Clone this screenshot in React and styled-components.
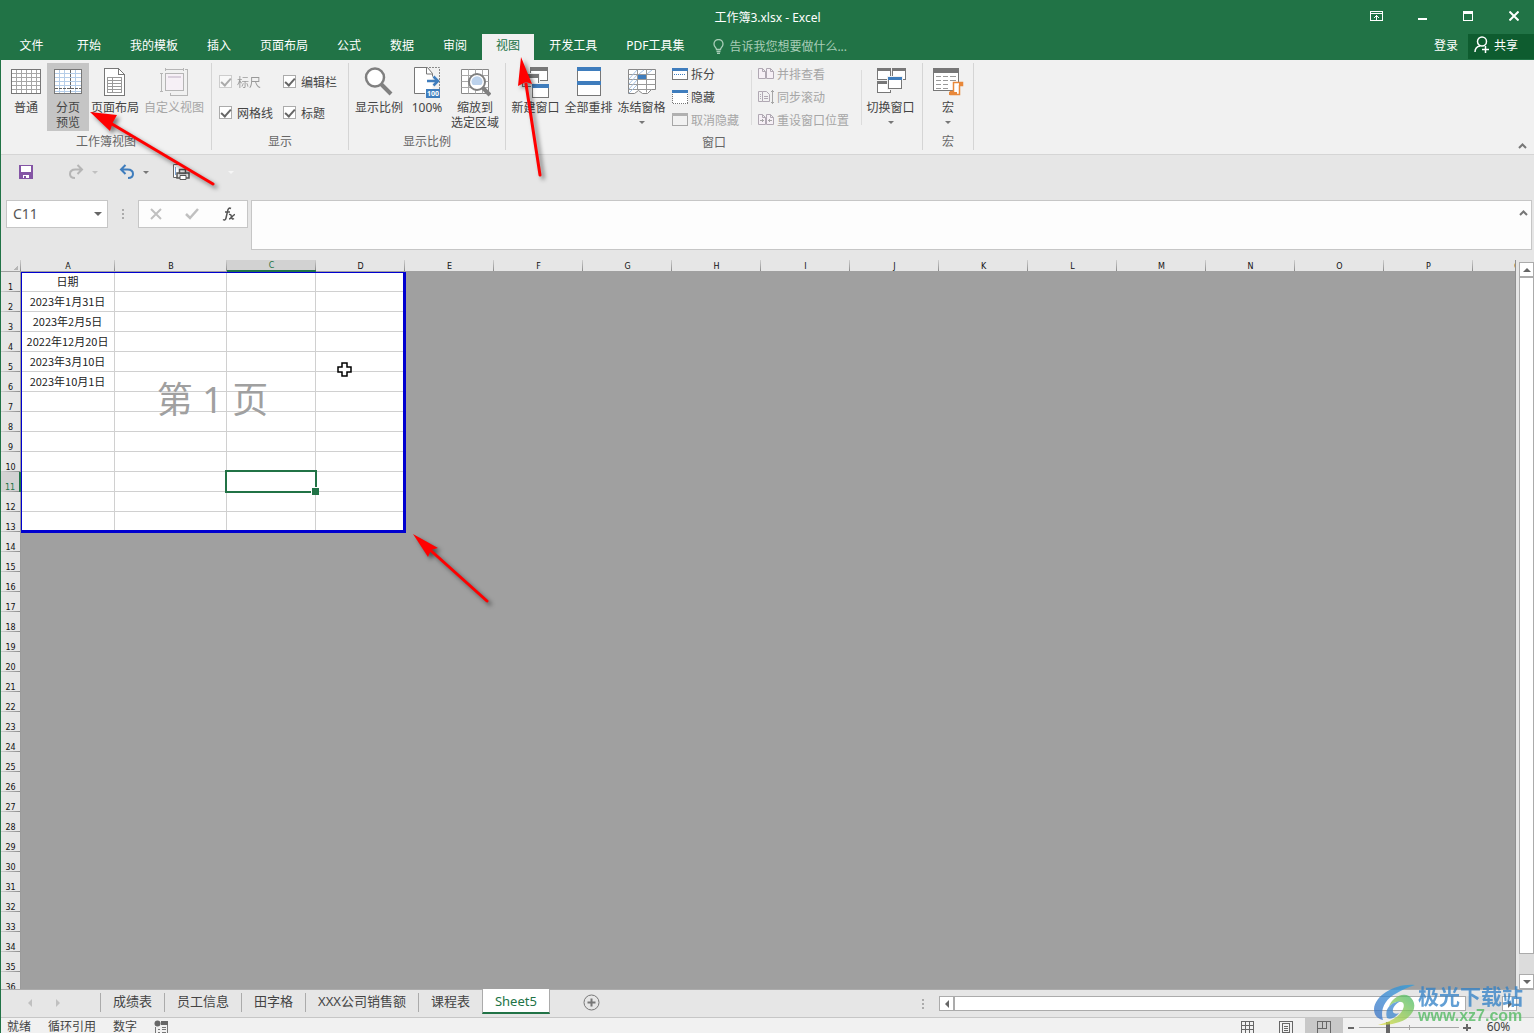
import React from "react"
import styled, { createGlobalStyle, css } from "styled-components"

const GlobalStyle = createGlobalStyle`
  * {
    box-sizing: border-box;
  }
  body {
    margin: 0;
    font-family: "Noto Sans", "Noto Sans CJK SC", sans-serif;
    font-size: 12px;
    color: #444;
  }
  button, input, textarea {
    font: inherit;
    color: inherit;
    margin: 0;
    padding: 0;
    border: 0;
    background: none;
    outline: none;
  }
  svg {
    display: block;
    flex: none;
  }
`

const Window = styled.div`
  position: relative;
  display: flex;
  flex-direction: column;
  height: 100vh;
  overflow: hidden;
  border-left: 1px solid #217346;
  background: #e6e6e6;
`

/* title and menu */

const TitleBar = styled.header`
  display: grid;
  grid-template-columns: 1fr auto 1fr;
  align-items: center;
  flex: none;
  height: 34px;
  background: #217346;
  color: #fff;
`

const Title = styled.h1`
  grid-column: 2;
  margin: 0;
  font-size: 12px;
  font-weight: 400;
`

const WindowButtons = styled.div`
  display: flex;
  justify-content: flex-end;
  gap: 28px;
  padding: 0 11px 2px 0;
`

const WindowButton = styled.button`
  display: flex;
  align-items: center;
  justify-content: center;
  width: 18px;
  height: 32px;
`

const MenuBar = styled.nav`
  display: flex;
  gap: 1px;
  flex: none;
  height: 26px;
  background: #217346;
  color: #fff;
`

const MenuTab = styled.button`
  padding: 0 14px 4px;
  white-space: nowrap;
  ${p => p.$file && "width: 61px;"}
  ${p => p.$active && "background: #f1f1f1; color: #217346;"}
`

const TellMe = styled.label`
  display: flex;
  align-items: center;
  gap: 5px;
  flex: 1;
  padding: 0 0 1px 14px;
  color: #a8cdb7;

  input {
    flex: 1;
  }
  input::placeholder {
    color: #a8cdb7;
    opacity: 1;
  }
`

const SignIn = styled.button`
  padding: 0 9px 4px;
`

const Share = styled.button`
  display: flex;
  align-items: center;
  gap: 4px;
  width: 66px;
  height: 25px;
  padding: 0 0 4px 6px;
  background: #0e5c2f;
`

/* ribbon */

const Ribbon = styled.div`
  display: flex;
  flex: none;
  height: 95px;
  background: #f1f1f1;
  border-bottom: 1px solid #d5d5d5;
`

const Group = styled.section`
  display: flex;
  flex-direction: column;
  margin: 3px 0 4px;
  border-right: 1px solid #d5d5d5;
`

const GroupBody = styled.div`
  display: flex;
  height: 70px;
  padding: 0 ${p => p.$pad || 0}px;
`

const GroupName = styled.h2`
  margin: 0;
  padding-top: 3px;
  font-size: 12px;
  font-weight: 400;
  line-height: 16px;
  text-align: center;
  color: #666;
`

const BigButton = styled.button`
  display: flex;
  flex-direction: column;
  align-items: center;
  width: ${p => p.$w}px;
  padding-top: 4px;
  line-height: 15px;
  white-space: nowrap;
  color: ${p => (p.disabled ? "#a6a6a6" : "#444")};
  ${p => p.$on && "background: #c5c5c5;"}

  svg {
    margin-bottom: 1px;
  }
`

const Caret = styled.i`
  width: 0;
  height: 0;
  border: 3px solid transparent;
  border-top-color: ${p => p.$color || "#777"};
  border-bottom: 0;
  ${p => p.$below && "margin-top: 6px;"}
`

const CheckGrid = styled.div`
  display: grid;
  grid-template-columns: 64px 65px;
  grid-auto-rows: 31px;
  padding: 3px 0 0 7px;
`

const Check = styled.label`
  display: flex;
  align-items: center;
  gap: 5px;
  white-space: nowrap;
  opacity: ${p => (p.$dim ? 0.5 : 1)};

  input {
    display: grid;
    place-items: center;
    appearance: none;
    width: 13px;
    height: 13px;
    border: 1px solid #ababab;
    background: #fff;
  }
  input:checked::before {
    content: "";
    width: 4px;
    height: 8px;
    margin-bottom: 3px;
    border: solid #666;
    border-width: 0 2px 2px 0;
    transform: rotate(42deg);
  }
`

const Stack = styled.div`
  display: flex;
  flex-direction: column;
  width: ${p => p.$w}px;
  padding-left: ${p => p.$pad}px;
`

const Divider = styled.div`
  width: 1px;
  height: 55px;
  margin-top: 7px;
  background: #dcdcdc;
`

const SmallButton = styled.button`
  display: flex;
  align-items: center;
  gap: 3px;
  height: 23px;
  padding-bottom: 1px;
  white-space: nowrap;
  color: ${p => (p.disabled ? "#a6a6a6" : "#444")};
`

const Collapse = styled.button`
  align-self: flex-end;
  margin-left: auto;
  padding: 0 7px 5px 0;
`

/* quick access and formula bar */

const QuickAccess = styled.div`
  display: flex;
  align-items: center;
  flex: none;
  height: 34px;
  padding-left: 17px;
`

const QuickButton = styled.button`
  display: flex;
  align-items: center;
  gap: ${p => p.$gap || 0}px;
  margin-right: ${p => p.$after || 0}px;
`

const FormulaBar = styled.div`
  display: flex;
  align-items: flex-start;
  flex: none;
  padding: 11px 2px 10px 5px;
`

const NameBox = styled.label`
  display: flex;
  align-items: center;
  width: 102px;
  height: 28px;
  padding: 0 5px 1px 6px;
  border: 1px solid #c6c6c6;
  background: #fff;

  input {
    flex: 1;
    min-width: 0;
    font-size: 14px;
    color: #555;
  }
`

const Grip = styled.div`
  display: flex;
  flex-direction: column;
  align-items: center;
  justify-content: center;
  gap: 2px;
  width: ${p => p.$w}px;
  height: 28px;

  i {
    width: 2px;
    height: 2px;
    background: #ababab;
  }
`

const FormulaButtons = styled.div`
  display: flex;
  align-items: center;
  justify-content: space-around;
  width: 110px;
  height: 28px;
  margin-right: 3px;
  border: 1px solid #c6c6c6;
  background: #fdfdfd;
`

const FormulaInput = styled.div`
  display: flex;
  align-items: flex-start;
  flex: 1;
  height: 50px;
  border: 1px solid #c6c6c6;
  background: #fdfdfd;

  textarea {
    flex: 1;
    height: 48px;
    resize: none;
  }
  button {
    padding: 9px 3px;
  }
`

/* sheet */

const SheetArea = styled.main`
  display: flex;
  flex: 1;
  min-height: 0;
`

const SheetView = styled.div`
  position: relative;
  flex: 1;
  min-width: 0;
  overflow: hidden;
  background: #a0a0a0;
  border-right: 1px solid #8f8f8f;
`

const Sheet = styled.table`
  table-layout: fixed;
  width: 1561px;
  border-collapse: separate;
  border-spacing: 0;
`

const headFont = css`
  font-family: "DejaVu Sans", sans-serif;
  font-size: 8px;
  font-weight: 400;
  line-height: 8px;
  color: #111;
`

const ColHead = styled.th`
  ${headFont}
  height: 12px;
  padding: 2px 0 0;
  background: linear-gradient(#cfcfcf, #8c8c8c) right / 1px 100% no-repeat #e6e6e6;
  border-bottom: 1px solid #a0a0a0;
  ${p =>
    p.$on &&
    css`
      background-color: #d2d2d2;
      color: #217346;
      border-bottom: 2px solid #217346;
    `}
`

const Corner = styled.th`
  height: 12px;
  padding: 0;
  background:
    linear-gradient(135deg, transparent 50%, #b5b5b5 50%) 13px 6px / 4px 4px no-repeat,
    linear-gradient(#cfcfcf, #8c8c8c) right / 1px 100% no-repeat #e6e6e6;
  border-bottom: 1px solid #a0a0a0;
`

const RowHead = styled.th`
  ${headFont}
  height: 20px;
  padding: 0;
  vertical-align: bottom;
  background: linear-gradient(90deg, #cfcfcf, #8c8c8c) bottom / 100% 1px no-repeat #e6e6e6;
  border-right: 1px solid #9b9b9b;
  ${p =>
    p.$on &&
    css`
      background-color: #d2d2d2;
      color: #217346;
      border-right: 2px solid #217346;
    `}
`

const Cell = styled.td`
  height: 20px;
  padding: 0 0 2px;
  font-family: "Noto Sans CJK SC", sans-serif;
  font-size: 11px;
  line-height: 16px;
  text-align: center;
  white-space: nowrap;
  color: #222;
  ${p => p.$inPage && "background: #fff; border: solid #d0d0d0; border-width: 0 1px 1px 0;"}
`

const PageFrame = styled.div`
  position: absolute;
  left: 20px;
  top: 12px;
  display: flex;
  align-items: center;
  justify-content: center;
  width: 385px;
  height: 261px;
  padding-bottom: 8px;
  border: solid #0000d0;
  border-width: 1px 3px 3px 1px;
  font-size: 36px;
  color: #a0a0a0;
  pointer-events: none;
`

const Selection = styled.div`
  position: absolute;
  left: 224px;
  top: 210px;
  width: 92px;
  height: 23px;
  border: 2px solid #217346;

  &::after {
    content: "";
    position: absolute;
    right: -4px;
    bottom: -4px;
    width: 7px;
    height: 7px;
    border: solid #fff;
    border-width: 1px 0 0 1px;
    background: #217346;
  }
`

const CrossPointer = styled.svg`
  position: absolute;
  left: 336px;
  top: 102px;
`

const VScroll = styled.div`
  display: flex;
  flex-direction: column;
  width: 18px;
  padding: 2px 0 0 3px;
`

const HScroll = styled.div`
  display: flex;
  width: 578px;
  height: 15px;
  margin: 6px 17px 0 0;
`

const ScrollButton = styled.button`
  display: flex;
  align-items: center;
  justify-content: center;
  width: 15px;
  height: 15px;
  border: 1px solid #ababab;
  background: #fff;
`

const Thumb = styled.div`
  flex: ${p => p.$size};
  border: 1px solid #ababab;
  background: #fff;
`

const Track = styled.div`
  flex: ${p => p.$size};
  background: #dcdcdc;
`

/* sheet tabs and status */

const SheetBar = styled.div`
  display: flex;
  flex: none;
  height: 29px;
  border-top: 1px solid #ababab;
  border-bottom: 1px solid #c6c6c6;
`

const SheetNav = styled.div`
  display: flex;
  align-items: center;
  gap: 20px;
  width: 99px;
  padding: 0 0 2px 25px;
`

const SheetTab = styled.button`
  height: 19px;
  margin-top: 3px;
  padding: 0 12px 3px;
  border-left: 1px solid #ababab;
  font-size: 13px;
  line-height: 16px;
  white-space: nowrap;
  ${p =>
    p.$active &&
    css`
      height: 25px;
      margin-top: -1px;
      border: solid #ababab;
      border-width: 0 1px;
      border-bottom: 2px solid #217346;
      padding-bottom: 0;
      background: #fff;
      color: #217346;
    `}
`

const AddSheet = styled.button`
  display: flex;
  align-items: center;
  margin: 0 auto 2px 33px;
`

const StatusBar = styled.footer`
  display: flex;
  flex: none;
  height: 15px;
  padding-left: 6px;
  overflow: hidden;
  line-height: 17px;
  background: #f1f1f1;
`

const StatusText = styled.span`
  margin-right: 17px;
`

const StatusTools = styled.div`
  display: flex;
  margin-left: auto;
`

const ViewButton = styled.button`
  display: flex;
  align-items: flex-start;
  justify-content: center;
  width: 38px;
  height: 15px;
  padding-top: 3px;
  ${p => p.$on && "background: #c8c8c8;"}
`

const ZoomButton = styled.button`
  display: flex;
  width: 16px;
  padding: 5px 4px 0;
`

const ZoomRange = styled.input`
  appearance: none;
  width: 100px;
  height: 19px;
  background:
    linear-gradient(#a6a6a6, #a6a6a6) center / 1px 5px no-repeat,
    linear-gradient(#a6a6a6, #a6a6a6) center / 100% 1px no-repeat;

  &::-webkit-slider-thumb {
    appearance: none;
    width: 4px;
    height: 11px;
    background: #666;
  }
`

const ZoomValue = styled.button`
  width: 59px;
  padding-right: 12px;
  line-height: 17px;
`

/* overlays */

const Arrows = styled.svg`
  position: absolute;
  left: -1px;
  top: 0;
  pointer-events: none;
  filter: drop-shadow(3px 3px 2px rgba(0, 0, 0, 0.5));
`

const SiteMark = styled.div`
  position: absolute;
  right: 11px;
  bottom: 7px;
  display: flex;
  align-items: center;
  opacity: 0.75;
  pointer-events: none;
`

const SiteName = styled.div`
  font-size: 21px;
  font-weight: 700;
  line-height: 22px;
  color: #2e7fc6;
`

const SiteUrl = styled.div`
  font-family: "Liberation Sans", sans-serif;
  font-size: 16px;
  font-weight: 700;
  line-height: 18px;
  color: #4cb85c;
`

/* icons */

const Icon = ({ w = 32, h = 32, children, ...rest }) => (
  <svg width={w} height={h} viewBox={`0 0 ${w} ${h}`} fill="none" {...rest}>
    {children}
  </svg>
)

const NormalIcon = () => (
  <Icon shapeRendering="crispEdges">
    <rect x="1.5" y="2.5" width="29" height="24" fill="#fff" stroke="#777" />
    <path
      d="M2 6.5h28M2 10.5h28M2 14.5h28M2 18.5h28M2 22.5h28M6.5 3v23M11.5 3v23M16.5 3v23M21.5 3v23M26.5 3v23"
      stroke="#a6a6a6"
    />
  </Icon>
)

const PageBreakIcon = () => (
  <Icon shapeRendering="crispEdges">
    <rect x="2.5" y="2.5" width="27" height="24" fill="#fff" stroke="#777" />
    <path
      d="M3 6.5h26M3 10.5h26M3 14.5h26M3 18.5h26M3 24.5h26M7.5 3v23M12.5 3v23M23.5 3v23"
      stroke="#b5cde8"
    />
    <path d="M18.5 3v23M3 21.5h26" stroke="#666" strokeDasharray="3 1" />
  </Icon>
)

const PageLayoutIcon = () => (
  <Icon shapeRendering="crispEdges">
    <path d="M5.5 1.5h14l6 6v21h-20z" fill="#fff" stroke="#777" />
    <path d="M19.5 1.5v6h6" stroke="#777" />
    <path d="M8.5 10.5h14v15h-14zM8.5 13.5h14M8.5 16.5h14M8.5 19.5h14M8.5 22.5h14M13.5 10.5v15" stroke="#999" />
  </Icon>
)

const CustomViewIcon = () => (
  <Icon shapeRendering="crispEdges" stroke="#b5b5b5">
    <path d="M7.5 1v3M25.5 1v3M7 2.5h18M3.5 7v17M2 6.5h3M2 24.5h3" />
    <rect x="7.5" y="6.5" width="18" height="17" fill="#f6f0f6" />
    <path d="M10 9.5h13M10 10.5h13" stroke="#d9cfdc" />
    <path d="M27 2.5h2.5v26h-17V26" />
  </Icon>
)

const ZoomIcon = () => (
  <Icon>
    <path d="M18 17l10 10" stroke="#808080" strokeWidth="4" />
    <circle cx="12" cy="10.500" r="9" fill="#fff" stroke="#808080" strokeWidth="2.500" />
  </Icon>
)

const HundredIcon = () => (
  <Icon>
    <path d="M3.500 .5h12l6 6v20h-18z" fill="#fff" />
    <path d="M14 26.500H3.500V.5h13l5 6v3M15.500 .5v6.500h6" stroke="#777" />
    <path d="M18 .5h10.500v22" stroke="#888" strokeDasharray="2 1" />
    <path d="M16 14h11M22.500 9.500l4.500 4.500-4.500 4.500" stroke="#3f7dbd" strokeWidth="2.500" />
    <rect x="15" y="22" width="14" height="9" fill="#3f7dbd" />
    <text x="22" y="29" textAnchor="middle" fontSize="7" fontWeight="700" fill="#fff">
      100
    </text>
  </Icon>
)

const ZoomSelectionIcon = () => (
  <Icon>
    <path d="M2.500 2.500h27v24h-27z" fill="#fff" stroke="#888" />
    <path d="M2.500 8.500h27M2.500 14.500h27M2.500 20.500h27M9.500 2.500v24M16.500 2.500v24M23.500 2.500v24" stroke="#aaa" />
    <path d="M23 20l8 8" stroke="#808080" strokeWidth="4" />
    <circle cx="18" cy="15" r="8" fill="#fff" stroke="#808080" strokeWidth="2" />
    <path d="M13 17a5.500 5.500 0 1 1 10 0l-1 1h-8z" fill="#bcd2ec" />
  </Icon>
)

const Pane = ({ x, y, w, h, color = "#777", bar = 3 }) => (
  <g>
    <rect x={x - 1} y={y - 1} width={w + 2} height={h + 2} fill="#f1f1f1" />
    <rect x={x + 0.5} y={y + 0.5} width={w - 1} height={h - 1} fill="#fff" stroke="#777" />
    <rect x={x} y={y} width={w} height={bar} fill={color} />
  </g>
)

const NewWindowIcon = () => (
  <Icon shapeRendering="crispEdges">
    <Pane x={10} y={0} w={18} h={14} bar={4} />
    <Pane x={2} y={7} w={17} h={13} bar={4} />
    <Pane x={12} y={17} w={17} h={14} color="#3f7dbd" bar={4} />
  </Icon>
)

const ArrangeIcon = () => (
  <Icon shapeRendering="crispEdges">
    <rect x="4.5" y=".5" width="23" height="28" fill="#fff" stroke="#777" />
    <path d="M4 0h24v4H4zM4 14h24v4H4z" fill="#3f7dbd" />
  </Icon>
)

const FreezeIcon = () => (
  <Icon>
    <path d="M2.500 2.500h27v20l-4 0-4 4h-5l-4-3-4 3h-6z" fill="#fff" stroke="#888" />
    <path d="M2.500 7.500h27M2.500 12.500h27M2.500 17.500h27M2.500 22.500h23M11.500 2.500v20M20.500 2.500v23" stroke="#999" />
    <path d="M3 12l8-9M3 17l8-9M3 22l8-9M13 7l5-4M21 7l5-4M3 26l8-8" stroke="#a9c5e5" />
    <rect x="12" y="8" width="8" height="4" fill="#3f7dbd" />
  </Icon>
)

const SwitchIcon = () => (
  <Icon shapeRendering="crispEdges">
    <Pane x={2} y={1} w={14} h={12} />
    <Pane x={17} y={1} w={14} h={12} />
    <Pane x={2} y={14} w={14} h={12} />
    <Pane x={13} y={10} w={14} h={12} color="#3f7dbd" />
  </Icon>
)

const MacroIcon = () => (
  <Icon>
    <rect x="1.500" y="1.500" width="25" height="22" fill="#fff" stroke="#777" />
    <path d="M1 1h26v5H1z" fill="#777" />
    <path d="M4 9.500h5m2 0h5m2 0h6M4 13.500h5m2 0h5m2 0h6M4 17.500h5m2 0h5M4 21.500h5m2 0h5" stroke="#999" />
    <path d="M21.500 15.500h9v3h-3v9h-9v-3h3z" fill="#fff" stroke="#e8883a" strokeWidth="1.500" />
    <path d="M17 25h8v3h-8zM27 15h4v4h-4z" fill="#e8883a" />
  </Icon>
)

const SplitIcon = () => (
  <Icon w={16} h={14} shapeRendering="crispEdges">
    <rect x=".5" y="1.5" width="15" height="11" fill="#fff" stroke="#777" />
    <path d="M0 1h16v3H0z" fill="#3f7dbd" />
    <path d="M2 7.5h12" stroke="#3f7dbd" strokeDasharray="1 1" />
  </Icon>
)

const HideIcon = () => (
  <Icon w={16} h={14} shapeRendering="crispEdges">
    <rect x=".5" y=".5" width="15" height="13" fill="#fff" stroke="#777" strokeDasharray="1 1" />
    <path d="M0 0h16v3H0z" fill="#3f7dbd" />
  </Icon>
)

const UnhideIcon = () => (
  <Icon w={16} h={14} shapeRendering="crispEdges">
    <rect x=".5" y=".5" width="15" height="12" stroke="#a6a6a6" />
    <path d="M0 0h16v3H0z" fill="#b0b0b0" />
  </Icon>
)

const pages = "M.5 1.500h4l3 3v7h-7zM8.500 1.500h4l3 3v7h-7zM4.500 1.500v3h3M12.500 1.500v3h3"

const SideIcon = () => (
  <Icon w={16} h={14}>
    <path d={pages} fill="#f6f0f6" stroke="#b0a8b3" />
  </Icon>
)

const SyncIcon = () => (
  <Icon w={16} h={14}>
    <path d="M4.500 1.500h-4v10h4M4.500 1.500h4l3 3v7h-7zM2 4.500h1M2 6.500h1M2 8.500h1M6 6.500h4M6 8.500h4" stroke="#b0a8b3" />
    <path d="M14.500 0v14M13 1.500h3M13 12.500h3" stroke="#a6a6a6" />
  </Icon>
)

const ResetIcon = () => (
  <Icon w={16} h={14}>
    <path d={pages} fill="#f6f0f6" stroke="#b0a8b3" />
    <path d="M2 7.500h4M4.500 6v3M10 7.500h4M11.500 6v3" stroke="#a6a6a6" />
  </Icon>
)

const Chevron = () => (
  <Icon w={9} h={6}>
    <path d="M1 5l3.500-3.500L8 5" stroke="#777" strokeWidth="2" />
  </Icon>
)

const Triangle = ({ turn = 0, color = "#666" }) => (
  <Icon w={8} h={8}>
    <path d="M0 2h8l-4 4z" fill={color} transform={`rotate(${turn} 4 4)`} />
  </Icon>
)

const SaveIcon = () => (
  <Icon w={16} h={16} shapeRendering="crispEdges">
    <path d="M1 1h14v14H1z" fill="#8455a5" />
    <path d="M3 2h10v6H3zM5 11h6v3H5z" fill="#fff" />
    <path d="M6 12h2v2H6z" fill="#8455a5" />
  </Icon>
)

const UndoIcon = ({ color, flip }) => (
  <Icon w={16} h={16}>
    <path
      d="M6.500 1L2 5.500l4.500 4.500M2.500 5.500h6c3.500 0 5.500 2 5.500 4.500s-2 4-5 4"
      stroke={color}
      strokeWidth="2"
      transform={flip ? "matrix(-1 0 0 1 16 0)" : undefined}
    />
  </Icon>
)

const PreviewIcon = () => (
  <Icon w={18} h={16}>
    <path d="M6 13.500H1.500v-13h8l3 3" fill="#fff" stroke="#666" />
    <path d="M3.500 3v8" stroke="#7ba4d3" />
    <path d="M7.500 5.500h6v4h-6zM5 9h12v5H5z" fill="#e6e6e6" stroke="#555" strokeWidth="1.500" />
    <path d="M8 11.500h6v4H8z" fill="#fff" stroke="#555" />
  </Icon>
)

const LogoIcon = () => (
  <Icon w={46} h={42}>
    <defs>
      <linearGradient id="markBlue" x1="1" y1="0" x2="0" y2="1">
        <stop offset="0" stopColor="#2b9fe0" />
        <stop offset="1" stopColor="#3a70c4" />
      </linearGradient>
      <linearGradient id="markGreen" x1="1" y1="0" x2="0" y2="1">
        <stop offset="0" stopColor="#42b96a" />
        <stop offset="1" stopColor="#e2de3c" />
      </linearGradient>
    </defs>
    <path d="M43 1C24-1 3 11 2 25c0 7 4 10 9 11C8 27 12 15 25 9 30 6 36 3 43 1z" fill="url(#markBlue)" />
    <path d="M37 12c8 6 7 16-3 23-8 5-19 6-28 6 11-3 20-7 24-14 3-5 2-9-1-9-4-1-9 1-12 5 2-8 12-15 20-11z" fill="url(#markGreen)" />
    <path d="M15 34c-3-9 4-16 14-17-6 3-9 7-8 11 1 2 4 2 6 1-3 4-8 7-12 5z" fill="#3a86cf" />
  </Icon>
)

const tabs = ["开始", "我的模板", "插入", "页面布局", "公式", "数据", "审阅", "视图", "开发工具", "PDF工具集"]
const columns = "ABCDEFGHIJKLMNOPQ".split("")
const rows = Array.from({ length: 36 }, (_, i) => i + 1)
const dates = ["日期", "2023年1月31日", "2023年2月5日", "2022年12月20日", "2023年3月10日", "2023年10月1日"]
const sheets = ["成绩表", "员工信息", "田字格", "XXX公司销售额", "课程表", "Sheet5"]
const colWidths = { A: 94, B: 112 }

function ViewRibbon() {
  return (
    <Ribbon>
      <Group>
        <GroupBody $pad={4}>
          <BigButton $w={42}><NormalIcon />普通</BigButton>
          <BigButton $w={42} $on><PageBreakIcon />分页<br />预览</BigButton>
          <BigButton $w={52}><PageLayoutIcon />页面布局</BigButton>
          <BigButton $w={66} disabled><CustomViewIcon />自定义视图</BigButton>
        </GroupBody>
        <GroupName>工作簿视图</GroupName>
      </Group>
      <Group>
        <GroupBody>
          <CheckGrid>
            <Check $dim><input type="checkbox" defaultChecked disabled />标尺</Check>
            <Check><input type="checkbox" defaultChecked />编辑栏</Check>
            <Check><input type="checkbox" defaultChecked />网格线</Check>
            <Check><input type="checkbox" defaultChecked />标题</Check>
          </CheckGrid>
        </GroupBody>
        <GroupName>显示</GroupName>
      </Group>
      <Group>
        <GroupBody $pad={5}>
          <BigButton $w={50}><ZoomIcon />显示比例</BigButton>
          <BigButton $w={46}><HundredIcon />100%</BigButton>
          <BigButton $w={50}><ZoomSelectionIcon />缩放到<br />选定区域</BigButton>
        </GroupBody>
        <GroupName>显示比例</GroupName>
      </Group>
      <Group>
        <GroupBody $pad={3}>
          <BigButton $w={53}><NewWindowIcon />新建窗口</BigButton>
          <BigButton $w={53}><ArrangeIcon />全部重排</BigButton>
          <BigButton $w={53}><FreezeIcon />冻结窗格<Caret $below /></BigButton>
          <Stack $w={83} $pad={4}>
            <SmallButton><SplitIcon />拆分</SmallButton>
            <SmallButton><HideIcon />隐藏</SmallButton>
            <SmallButton disabled><UnhideIcon />取消隐藏</SmallButton>
          </Stack>
          <Divider />
          <Stack $w={109} $pad={6}>
            <SmallButton disabled><SideIcon />并排查看</SmallButton>
            <SmallButton disabled><SyncIcon />同步滚动</SmallButton>
            <SmallButton disabled><ResetIcon />重设窗口位置</SmallButton>
          </Stack>
          <Divider />
          <BigButton $w={57}><SwitchIcon />切换窗口<Caret $below /></BigButton>
        </GroupBody>
        <GroupName>窗口</GroupName>
      </Group>
      <Group>
        <GroupBody>
          <BigButton $w={50}><MacroIcon />宏<Caret $below /></BigButton>
        </GroupBody>
        <GroupName>宏</GroupName>
      </Group>
      <Collapse aria-label="折叠功能区"><Chevron /></Collapse>
    </Ribbon>
  )
}

function Grid() {
  return (
    <SheetView>
      <Sheet>
        <colgroup>
          <col width="20" />
          {columns.map(c => <col key={c} width={colWidths[c] || 89} />)}
        </colgroup>
        <thead>
          <tr>
            <Corner />
            {columns.map(c => <ColHead key={c} $on={c === "C"}>{c}</ColHead>)}
          </tr>
        </thead>
        <tbody>
          {rows.map(r => (
            <tr key={r}>
              <RowHead $on={r === 11}>{r}</RowHead>
              {columns.map((c, i) => (
                <Cell key={c} $inPage={r <= 13 && i < 4}>
                  {c === "A" ? dates[r - 1] : null}
                </Cell>
              ))}
            </tr>
          ))}
        </tbody>
      </Sheet>
      <PageFrame>第 1 页</PageFrame>
      <Selection />
      <CrossPointer width="15" height="15" viewBox="0 0 15 15">
        <path d="M5 1h5v4h4v5h-4v4H5v-4H1V5h4z" fill="#fff" stroke="#000" strokeWidth="1.500" />
      </CrossPointer>
    </SheetView>
  )
}

export default function App() {
  return (
    <Window>
      <GlobalStyle />
      <TitleBar>
        <Title>工作簿3.xlsx - Excel</Title>
        <WindowButtons>
          <WindowButton aria-label="功能区显示选项">
            <Icon w={13} h={10} shapeRendering="crispEdges" stroke="#fff">
              <path d="M.5 .5h12v9H.5zM1 2.500h12M6.500 4v5M5 5.500h3M4 6.500h1M8 6.500h1" />
            </Icon>
          </WindowButton>
          <WindowButton aria-label="最小化">
            <Icon w={10} h={10}><path d="M1 8h9" stroke="#fff" strokeWidth="2" /></Icon>
          </WindowButton>
          <WindowButton aria-label="最大化">
            <Icon w={10} h={10} shapeRendering="crispEdges">
              <path d="M.5 .5h9v9h-9z" stroke="#fff" />
              <path d="M0 0h10v3H0z" fill="#fff" />
            </Icon>
          </WindowButton>
          <WindowButton aria-label="关闭">
            <Icon w={10} h={10}><path d="M.5 .5l9 9M9.500 .5l-9 9" stroke="#fff" strokeWidth="2" /></Icon>
          </WindowButton>
        </WindowButtons>
      </TitleBar>
      <MenuBar>
        <MenuTab $file>文件</MenuTab>
        {tabs.map(t => <MenuTab key={t} $active={t === "视图"}>{t}</MenuTab>)}
        <TellMe>
          <Icon w={11} h={15} stroke="#a8cdb7">
            <path d="M3.500 10.500c0-2-2.500-2.500-2.500-5.500a4.500 4.500 0 0 1 9 0c0 3-2.500 3.500-2.500 5.500zM3.500 12.500h4M4 14.500h3" strokeWidth="1.300" />
          </Icon>
          <input placeholder="告诉我您想要做什么..." aria-label="告诉我您想要做什么" />
        </TellMe>
        <SignIn>登录</SignIn>
        <Share>
          <Icon w={16} h={17} stroke="#fff" strokeWidth="1.500">
            <circle cx="8" cy="5.500" r="4.500" />
            <path d="M1 16c0-3 2-5.500 5-6M8 13.500h7M11.500 10v7" />
          </Icon>
          共享
        </Share>
      </MenuBar>
      <ViewRibbon />
      <QuickAccess>
        <QuickButton $after={34} aria-label="保存"><SaveIcon /></QuickButton>
        <QuickButton $gap={8} $after={21} aria-label="恢复">
          <UndoIcon color="#b5b5b5" flip />
          <Caret $color="#c0c0c0" />
        </QuickButton>
        <QuickButton $gap={8} $after={23} aria-label="撤消">
          <UndoIcon color="#3f7dbd" />
          <Caret />
        </QuickButton>
        <QuickButton $after={38} aria-label="打印预览"><PreviewIcon /></QuickButton>
        <QuickButton aria-label="自定义"><Caret $color="#f6f6f6" /></QuickButton>
      </QuickAccess>
      <FormulaBar>
        <NameBox>
          <input defaultValue="C11" aria-label="名称框" />
          <Triangle />
        </NameBox>
        <Grip $w={30}><i /><i /><i /></Grip>
        <FormulaButtons>
          <button aria-label="取消">
            <Icon w={12} h={12}><path d="M1 1l10 10M11 1L1 11" stroke="#c0c0c0" strokeWidth="2" /></Icon>
          </button>
          <button aria-label="输入">
            <Icon w={14} h={12}><path d="M1 6l4 4 8-9" stroke="#c0c0c0" strokeWidth="2.500" /></Icon>
          </button>
          <button aria-label="插入函数">
            <Icon w={14} h={14} stroke="#555">
              <path d="M9 1.500c-2-1-3 0-3.500 3L4 11c-.5 2-1.500 2.500-3 1.500M3 5h5M7 7.500c2-.5 2 .5 2.500 2.500s1 2.500 2.500 1.500M13 7.500c-2 0-4 4.500-6 4.500" strokeWidth="1.500" />
            </Icon>
          </button>
        </FormulaButtons>
        <FormulaInput>
          <textarea aria-label="编辑栏" />
          <button aria-label="折叠编辑栏"><Chevron /></button>
        </FormulaInput>
      </FormulaBar>
      <SheetArea>
        <Grid />
        <VScroll>
          <ScrollButton aria-label="向上"><Triangle turn={180} /></ScrollButton>
          <Thumb $size={34} />
          <Track $size={1} />
          <ScrollButton aria-label="向下"><Triangle /></ScrollButton>
        </VScroll>
      </SheetArea>
      <SheetBar>
        <SheetNav>
          <Triangle turn={90} color="#c0c0c0" />
          <Triangle turn={-90} color="#c0c0c0" />
        </SheetNav>
        {sheets.map(s => <SheetTab key={s} $active={s === "Sheet5"}>{s}</SheetTab>)}
        <AddSheet aria-label="新工作表">
          <Icon w={17} h={17} stroke="#777">
            <circle cx="8.500" cy="8.500" r="7.500" />
            <path d="M4.500 8.500h8M8.500 4.500v8" strokeWidth="2" />
          </Icon>
        </AddSheet>
        <Grip $w={32}><i /><i /><i /></Grip>
        <HScroll>
          <ScrollButton aria-label="向左"><Triangle turn={90} /></ScrollButton>
          <Thumb $size={14} />
          <Track $size={1} />
          <ScrollButton aria-label="向右"><Triangle turn={-90} /></ScrollButton>
        </HScroll>
      </SheetBar>
      <StatusBar>
        <StatusText>就绪</StatusText>
        <StatusText>循环引用</StatusText>
        <StatusText>数字</StatusText>
        <Icon w={14} h={18}>
          <circle cx="3.500" cy="5.500" r="3" fill="#666" />
          <path d="M7 3h7v4H7z" fill="#666" />
          <path d="M1.500 9v8h12V7M4 11.500h2M8 11.500h4M4 14.500h2M8 14.500h4M8 9.500h4" stroke="#777" />
        </Icon>
        <StatusTools>
          <ViewButton aria-label="普通">
            <Icon w={14} h={14} shapeRendering="crispEdges">
              <path d="M.5 .5h12v12H.5zM4.500 0v13M8.500 0v13M0 4.500h13M0 8.500h13" stroke="#666" />
            </Icon>
          </ViewButton>
          <ViewButton aria-label="页面布局">
            <Icon w={14} h={14} shapeRendering="crispEdges">
              <path d="M.5 .5h13v13H.5zM3.500 2.500h7v9h-7zM5 5.500h4M5 7.500h4M5 9.500h4" stroke="#666" />
            </Icon>
          </ViewButton>
          <ViewButton $on aria-label="分页预览">
            <Icon w={14} h={14} shapeRendering="crispEdges">
              <path d="M.5 .5h13v13H.5zM5.500 0v7M9.500 0v7M0 7.500h10" stroke="#666" />
            </Icon>
          </ViewButton>
          <ZoomButton aria-label="缩小">
            <Icon w={8} h={8}><path d="M1 5h6" stroke="#666" strokeWidth="2" /></Icon>
          </ZoomButton>
          <ZoomRange type="range" min="0" max="100" defaultValue="28" aria-label="显示比例" />
          <ZoomButton aria-label="放大">
            <Icon w={8} h={8}><path d="M0 5h8M4 1v8" stroke="#666" strokeWidth="2" /></Icon>
          </ZoomButton>
          <ZoomValue>60%</ZoomValue>
        </StatusTools>
      </StatusBar>

      <SiteMark>
        <LogoIcon />
        <div>
          <SiteName>极光下载站</SiteName>
          <SiteUrl>www.xz7.com</SiteUrl>
        </div>
      </SiteMark>
      <Arrows width="560" height="620" viewBox="0 0 560 620" fill="#f00" stroke="#f00">
        <path d="M112 124l101 60M526 84l14 91M428 548l59 53" strokeWidth="3" strokeLinecap="round" />
        <path
          d="M90 112l27 3-4 7-3 9zM521 57l11 27-6-2-8 4zM413 534l25 14-7 2-3 7z"
          strokeWidth="0"
        />
      </Arrows>
    </Window>
  )
}
